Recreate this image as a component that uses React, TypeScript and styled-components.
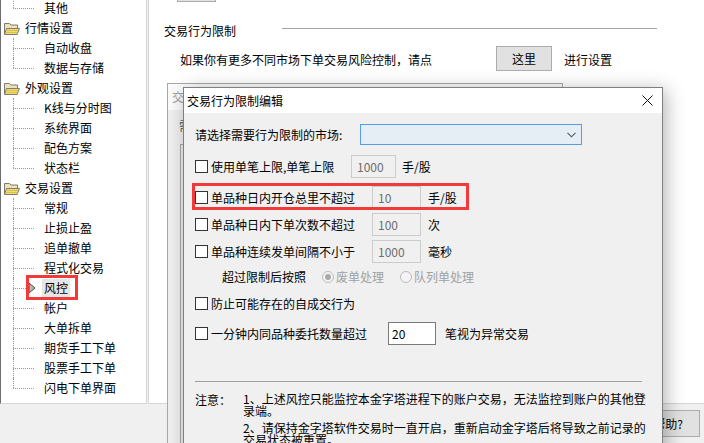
import React from 'react';
import styled, { createGlobalStyle } from 'styled-components';

const GlobalStyle = createGlobalStyle`
  html, body {
    margin: 0;
    padding: 0;
  }
  body {
    font-family: "Noto Sans CJK SC", "Noto Sans", sans-serif;
    font-size: 12px;
    color: #000;
  }
`;

const Screen = styled.div`
  position: relative;
  width: 704px;
  height: 443px;
  overflow: hidden;
  background: #f0f0f0;
  display: flex;
  flex-direction: column;
`;

const Panels = styled.div`
  display: flex;
  gap: 1px;
  height: 404px;
`;

/* ---------- tree ---------- */

const TreePanel = styled.div`
  width: 145px;
  background: #fff;
  border-left: 1px solid #6e6e6e;
  border-right: 1px solid #d6d6d6;
  border-bottom: 1px solid #d6d6d6;
  overflow: hidden;
`;

const TreeList = styled.div`
  margin-top: -2px;
`;

const TreeRow = styled.div`
  position: relative;
  display: flex;
  align-items: center;
  height: 20px;
  line-height: 18px;
  white-space: nowrap;
`;

const Branch = styled.span<{ $last?: boolean }>`
  position: relative;
  flex: none;
  width: 32px;
  height: 20px;
  &::before {
    content: '';
    position: absolute;
    left: 12px;
    top: 0;
    height: ${p => (p.$last ? '10px' : '20px')};
    border-left: 1px dotted #9a9a9a;
  }
  &::after {
    content: '';
    position: absolute;
    left: 12px;
    top: 10px;
    width: 21px;
    border-top: 1px dotted #9a9a9a;
  }
`;

const Folder = styled.svg`
  flex: none;
  margin-left: 3px;
`;

const ParentLabel = styled.span`
  margin-left: 5px;
`;

const ChildLabel = styled.span<{ $selected?: boolean }>`
  margin-left: 9px;
  padding: 0 2px;
  background: ${p => (p.$selected ? '#e6e6e6' : 'transparent')};
`;

const SelArrow = styled.svg`
  position: absolute;
  left: 27px;
  top: 4px;
`;

const Highlight = styled.span`
  position: absolute;
  left: 25px;
  top: -3px;
  width: 52px;
  height: 25px;
  box-sizing: border-box;
  border: 3px solid #f23a3a;
`;

/* ---------- right content ---------- */

const ContentPanel = styled.div`
  flex: 1;
  background: #fff;
  border-left: 1px solid #d6d6d6;
  border-bottom: 1px solid #d6d6d6;
  display: flex;
  flex-direction: column;
`;

const TopStub = styled.div`
  width: 37px;
  height: 20px;
  margin: -20px 0 0 28px;
  border: 1px solid #adadad;
  background: #e1e1e1;
`;

const GroupHeader = styled.div`
  display: flex;
  align-items: flex-start;
  margin-top: 21px;
  padding-left: 15px;
  line-height: 16px;
`;

const GroupLine = styled.div`
  flex: 1;
  margin: 5px 47px 0 46px;
  border-top: 1px solid #a5a5a5;
`;

const InfoRow = styled.div`
  display: flex;
  align-items: center;
  margin-top: 7px;
  padding-left: 31px;
  height: 25px;
  line-height: 16px;
  span {
    padding-top: 2px;
  }
`;

const PushButton = styled.button`
  box-sizing: border-box;
  width: ${p => p.$w}px;
  height: ${p => p.$h}px;
  margin-left: ${p => p.$ml ?? 0}px;
  padding: 0;
  border: 1px solid #adadad;
  background: #e1e1e1;
  font: inherit;
  line-height: 16px;
  color: #000;
` as any;

const InfoTail = styled.span`
  margin-left: 12px;
`;

const BottomBar = styled.div`
  flex: 1;
  display: flex;
  justify-content: flex-end;
  align-items: flex-start;
  padding: 6px 4px 0 0;
`;

/* ---------- dialogs ---------- */

const BackDialog = styled.div`
  position: absolute;
  left: 167px;
  top: 83px;
  width: 394px;
  height: 400px;
  border: 1px solid #a8a8a8;
  background: #f0f0f0;
  display: flex;
  flex-direction: column;
`;

const BackTitle = styled.div`
  height: 26px;
  background: #fbfbfb;
  color: #a0a0a0;
  padding-left: 4px;
  line-height: 26px;
`;

const BackBody = styled.div`
  padding: 8px 0 0 11px;
  color: #606060;
  line-height: 16px;
`;

const BackGroup = styled.div`
  margin: 10px 0 0 1px;
  height: 300px;
  border: 1px solid #a8a8a8;
  border-right: none;
`;

const Dialog = styled.div`
  position: absolute;
  left: 183px;
  top: 87px;
  width: 480px;
  height: 380px;
  box-sizing: border-box;
  border: 1px solid #7f7f7f;
  background: #f0f0f0;
  box-shadow: 3px 3px 18px rgba(0, 0, 0, 0.3);
  display: flex;
  flex-direction: column;
`;

const TitleBar = styled.div`
  display: flex;
  align-items: center;
  justify-content: space-between;
  height: 25px;
  padding: 0 9px 0 3px;
  background: #fff;
  line-height: 16px;
`;

const DialogBody = styled.div`
  display: flex;
  flex-direction: column;
  padding-left: 11px;
  line-height: 16px;
`;

const MarketRow = styled.div`
  display: flex;
  align-items: center;
  margin-top: 11px;
  height: 21px;
`;

const MarketLabel = styled.span`
  width: 165px;
`;

const Select = styled.div`
  box-sizing: border-box;
  width: 222px;
  height: 21px;
  border: 1px solid #569de5;
  background: #e5edf5;
  display: flex;
  align-items: center;
  justify-content: flex-end;
  padding-right: 5px;
`;

const Row = styled.div<{ $mt: number; $marked?: boolean }>`
  position: relative;
  display: flex;
  align-items: center;
  height: 23px;
  margin-top: ${p => p.$mt}px;
  &::after {
    content: '';
    display: ${p => (p.$marked ? 'block' : 'none')};
    position: absolute;
    left: -3px;
    top: -3px;
    width: 277px;
    height: 27px;
    box-sizing: border-box;
    border: 3px solid #f23a3a;
  }
`;

const CheckLabel = styled.label<{ $w?: number }>`
  display: flex;
  align-items: center;
  flex: none;
  width: ${p => (p.$w ? `${p.$w}px` : 'auto')};
  span {
    padding-top: 1px;
  }
`;

const Box = styled.span`
  flex: none;
  box-sizing: border-box;
  width: 13px;
  height: 13px;
  margin-right: 3px;
  border: 1px solid #333;
  background: #fff;
  padding: 0 !important;
`;

const NumInput = styled.div<{ $w: number; $active?: boolean }>`
  box-sizing: border-box;
  width: ${p => p.$w}px;
  height: 23px;
  padding: 3px 0 0 ${p => (p.$active ? 3 : 5)}px;
  border: 1px solid ${p => (p.$active ? '#7a7a7a' : '#cccccc')};
  background: ${p => (p.$active ? '#fff' : '#f0f0f0')};
  color: ${p => (p.$active ? '#000' : '#6d6d6d')};
`;

const Unit = styled.span<{ $ml?: number }>`
  margin-left: ${p => p.$ml ?? 7}px;
  padding-top: 1px;
`;

const RadioRow = styled.div`
  display: flex;
  align-items: center;
  height: 23px;
  margin-top: 2px;
  padding-left: 27px;
`;

const RadioCaption = styled.span`
  margin-right: 16px;
`;

const RadioItem = styled.span`
  display: flex;
  align-items: center;
  margin-right: 16px;
  color: #a0a0a0;
`;

const RadioDot = styled.span<{ $on?: boolean }>`
  box-sizing: border-box;
  width: 12px;
  height: 12px;
  margin-right: 2px;
  border-radius: 50%;
  border: 1px solid #bcbcbc;
  background: #f4f4f4;
  display: flex;
  align-items: center;
  justify-content: center;
  &::after {
    content: '';
    display: ${p => (p.$on ? 'block' : 'none')};
    width: 6px;
    height: 6px;
    border-radius: 50%;
    background: #a8a8a8;
  }
`;

const Separator = styled.div`
  width: 447px;
  margin-top: 36px;
  border-top: 1px solid #a0a0a0;
`;

const Notes = styled.div`
  display: flex;
  margin-top: 11px;
  line-height: 12px;
`;

const NoteLabel = styled.span`
  width: 48px;
  flex: none;
  padding-top: 1px;
`;

const NoteList = styled.div`
  display: flex;
  flex-direction: column;
  gap: 5px;
`;

const Note = styled.p`
  margin: 0;
  white-space: nowrap;
`;

type TreeItem = { text: string; kind: 'parent' | 'child'; last?: boolean; selected?: boolean };

const tree: TreeItem[] = [
  { text: '其他', kind: 'child', last: true },
  { text: '行情设置', kind: 'parent' },
  { text: '自动收盘', kind: 'child' },
  { text: '数据与存储', kind: 'child', last: true },
  { text: '外观设置', kind: 'parent' },
  { text: 'K线与分时图', kind: 'child' },
  { text: '系统界面', kind: 'child' },
  { text: '配色方案', kind: 'child' },
  { text: '状态栏', kind: 'child', last: true },
  { text: '交易设置', kind: 'parent' },
  { text: '常规', kind: 'child' },
  { text: '止损止盈', kind: 'child' },
  { text: '追单撤单', kind: 'child' },
  { text: '程式化交易', kind: 'child' },
  { text: '风控', kind: 'child', selected: true },
  { text: '帐户', kind: 'child' },
  { text: '大单拆单', kind: 'child' },
  { text: '期货手工下单', kind: 'child' },
  { text: '股票手工下单', kind: 'child' },
  { text: '闪电下单界面', kind: 'child', last: true },
];

const FolderIcon = () => (
  <Folder width="16" height="13" viewBox="0 0 16 13">
    <path d="M0.5 1.5 h5 l1.5 1.5 h6.5 v9 h-13 z" fill="#ece3b8" stroke="#7a7a7a" />
    <path d="M2.5 6.5 h13 l-2.5 6 h-12.5 z" fill="#f4dd6c" stroke="#7a7a7a" />
    <path d="M3 8.5 h11 M2.5 10.5 h11" stroke="#d9c050" />
  </Folder>
);

const Check = ({ children, w }: { children: React.ReactNode; w?: number }) => (
  <CheckLabel $w={w}>
    <Box />
    <span>{children}</span>
  </CheckLabel>
);

export default function App() {
  return (
    <Screen>
      <GlobalStyle />
      <Panels>
        <TreePanel>
          <TreeList>
            {tree.map(item =>
              item.kind === 'parent' ? (
                <TreeRow key={item.text}>
                  <FolderIcon />
                  <ParentLabel>{item.text}</ParentLabel>
                </TreeRow>
              ) : (
                <TreeRow key={item.text}>
                  <Branch $last={item.last} />
                  {item.selected && (
                    <SelArrow width="8" height="12" viewBox="0 0 8 12">
                      <path d="M1 1 L7 6 L1 11 Z" fill="#b8b8b8" stroke="#4a4a4a" strokeWidth="1" />
                    </SelArrow>
                  )}
                  <ChildLabel $selected={item.selected}>{item.text}</ChildLabel>
                  {item.selected && <Highlight />}
                </TreeRow>
              )
            )}
          </TreeList>
        </TreePanel>

        <ContentPanel>
          <TopStub />
          <GroupHeader>
            <span>交易行为限制</span>
            <GroupLine />
          </GroupHeader>
          <InfoRow>
            <span>如果你有更多不同市场下单交易风险控制，请点</span>
            <PushButton $w={56} $h={25} $ml={64}>这里</PushButton>
            <InfoTail>进行设置</InfoTail>
          </InfoRow>
        </ContentPanel>
      </Panels>

      <BottomBar>
        <PushButton $w={64} $h={27}>帮助?</PushButton>
      </BottomBar>

      <BackDialog>
        <BackTitle>交易行为限制</BackTitle>
        <BackBody>
          需要限制的市场
          <BackGroup />
        </BackBody>
      </BackDialog>

      <Dialog>
        <TitleBar>
          <span>交易行为限制编辑</span>
          <svg width="11" height="11" viewBox="0 0 11 11">
            <path d="M0.5 0.5 L10.5 10.5 M10.5 0.5 L0.5 10.5" stroke="#111" strokeWidth="1" />
          </svg>
        </TitleBar>
        <DialogBody>
          <MarketRow>
            <MarketLabel>请选择需要行为限制的市场:</MarketLabel>
            <Select>
              <svg width="9" height="6" viewBox="0 0 9 6">
                <path d="M0.5 0.8 L4.5 4.8 L8.5 0.8" fill="none" stroke="#555" strokeWidth="1.1" />
              </svg>
            </Select>
          </MarketRow>

          <Row $mt={10}>
            <Check w={156}>使用单笔上限,单笔上限</Check>
            <NumInput $w={45}>1000</NumInput>
            <Unit $ml={6}>手/股</Unit>
          </Row>
          <Row $mt={8} $marked>
            <Check w={177}>单品种日内开仓总里不超过</Check>
            <NumInput $w={49}>10</NumInput>
            <Unit>手/股</Unit>
          </Row>
          <Row $mt={4}>
            <Check w={177}>单品种日内下单次数不超过</Check>
            <NumInput $w={49}>100</NumInput>
            <Unit>次</Unit>
          </Row>
          <Row $mt={4}>
            <Check w={177}>单品种连续发单间隔不小于</Check>
            <NumInput $w={49}>1000</NumInput>
            <Unit>毫秒</Unit>
          </Row>
          <RadioRow>
            <RadioCaption>超过限制后按照</RadioCaption>
            <RadioItem>
              <RadioDot $on />
              废单处理
            </RadioItem>
            <RadioItem>
              <RadioDot />
              队列单处理
            </RadioItem>
          </RadioRow>
          <Row $mt={4}>
            <Check>防止可能存在的自成交行为</Check>
          </Row>
          <Row $mt={7}>
            <Check w={193}>一分钟内同品种委托数量超过</Check>
            <NumInput $w={48} $active>20</NumInput>
            <Unit $ml={9}>笔视为异常交易</Unit>
          </Row>

          <Separator />
          <Notes>
            <NoteLabel>注意：</NoteLabel>
            <NoteList>
              <Note>
                1、上述风控只能监控本金字塔进程下的账户交易，无法监控到账户的其他登
                <br />
                录端。
              </Note>
              <Note>
                2、请保持金字塔软件交易时一直开启，重新启动金字塔后将导致之前记录的
                <br />
                交易状态被重置。
              </Note>
            </NoteList>
          </Notes>
        </DialogBody>
      </Dialog>
    </Screen>
  );
}
